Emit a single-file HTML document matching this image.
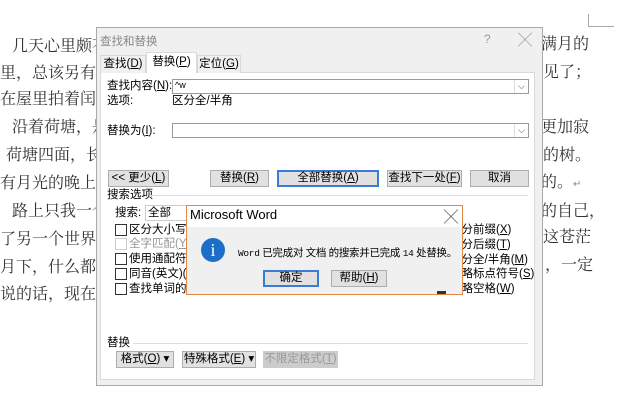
<!DOCTYPE html>
<html><head><meta charset="utf-8"><style>
*{margin:0;padding:0;box-sizing:border-box}
body{width:640px;height:420px;overflow:hidden;background:#fff;position:relative;font-family:"Liberation Sans","Noto Sans CJK SC",sans-serif;font-size:12px;color:#000}
.a{position:absolute;white-space:nowrap}
.bg{font-family:"Liberation Serif","Noto Serif CJK SC",serif;font-size:16px;color:#333;line-height:20px}
.btn{position:absolute;height:17px;background:#e1e1e1;border:1px solid #adadad;text-align:center;line-height:15px;font-size:11.5px}
.cb{position:absolute;width:12px;height:12px;border:1px solid #333;background:#fff}
.lbl{position:absolute;font-size:11.5px;white-space:nowrap;line-height:14px}
.inp{position:absolute;height:15px;background:#fff;border:1px solid #9a9a9a}
.dd{position:absolute;right:0;top:0;width:14px;height:13px;border-left:1px solid #ddd;font-size:9px;text-align:center;line-height:13px;color:#444}
</style></head><body>
<div class="a" style="left:588px;top:14px;width:26px;height:13px;border-left:1px solid #aaa;border-bottom:1px solid #aaa"></div>
<div class="a bg" style="left:12px;top:37px">几天心里颇不宁静</div>
<div class="a bg" style="left:0;top:64px">里，总该另有一番</div>
<div class="a bg" style="left:0;top:90px">在屋里拍着闰儿，</div>
<div class="a bg" style="left:12px;top:118px">沿着荷塘，是一</div>
<div class="a bg" style="left:6px;top:146px">荷塘四面，长着</div>
<div class="a bg" style="left:0;top:174px">有月光的晚上，这</div>
<div class="a bg" style="left:12px;top:202px">路上只我一个人</div>
<div class="a bg" style="left:0;top:230px">了另一个世界里。</div>
<div class="a bg" style="left:0;top:258px">月下，什么都可以</div>
<div class="a bg" style="left:0;top:285px">说的话，现在都可</div>
<div class="a bg" style="left:541px;top:35px">满月的</div>
<div class="a bg" style="left:543px;top:63px">见了；</div>
<div class="a bg" style="left:541px;top:118px">更加寂</div>
<div class="a bg" style="left:543px;top:146px">的树。</div>
<div class="a bg" style="left:541px;top:173px">的。<span style="font-size:10px;color:#888">↵</span></div>
<div class="a bg" style="left:541px;top:202px">的自己，</div>
<div class="a bg" style="left:543px;top:228px">这苍茫</div>
<div class="a bg" style="left:545px;top:256px">，一定</div>

<!-- dialog -->
<div class="a" style="left:96px;top:27px;width:447px;height:359px;background:#f0f0f0;border:1px solid #aaa"></div>
<div class="a" style="left:100px;top:33px;color:#888;font-size:11.5px">查找和替换</div>
<div class="a" style="left:484px;top:32px;color:#999;font-size:12px">?</div>
<div class="a" style="left:518px;top:30px;color:#888;font-size:14px;font-weight:300">╳</div>
<div class="a" style="left:100px;top:72px;width:435px;height:308px;background:#fff;border:1px solid #d9d9d9"></div>
<div class="a" style="left:100px;top:55px;width:46px;height:18px;border:1px solid #d9d9d9;border-bottom:none;background:#f0f0f0;font-size:11.5px;text-align:center;line-height:17px">查找(<u>D</u>)</div>
<div class="a" style="left:146px;top:52px;width:51px;height:21px;border:1px solid #d9d9d9;border-bottom:none;background:#fff;font-size:11.5px;text-align:center;line-height:18px">替换(<u>P</u>)</div>
<div class="a" style="left:197px;top:55px;width:44px;height:18px;border:1px solid #d9d9d9;border-bottom:none;background:#f0f0f0;font-size:11.5px;text-align:center;line-height:17px">定位(<u>G</u>)</div>

<div class="lbl" style="left:107px;top:79px">查找内容(<u>N</u>):</div>
<div class="inp" style="left:172px;top:79px;width:357px"><span style="font-size:9px;position:absolute;left:2px;top:0">^w</span><div class="dd">⌵</div></div>
<div class="lbl" style="left:107px;top:94px">选项:</div>
<div class="lbl" style="left:172px;top:94px">区分全/半角</div>
<div class="lbl" style="left:107px;top:124px">替换为(<u>I</u>):</div>
<div class="inp" style="left:172px;top:123px;width:357px"><div class="dd">⌵</div></div>

<div class="btn" style="left:108px;top:170px;width:61px">&lt;&lt; 更少(<u>L</u>)</div>
<div class="btn" style="left:210px;top:170px;width:59px">替换(<u>R</u>)</div>
<div class="btn" style="left:277px;top:170px;width:102px;border:2px solid #3a7bd5;line-height:13px">全部替换(<u>A</u>)</div>
<div class="btn" style="left:387px;top:170px;width:75px">查找下一处(<u>F</u>)</div>
<div class="btn" style="left:470px;top:170px;width:59px">取消</div>

<div class="lbl" style="left:107px;top:188px">搜索选项</div>
<div class="a" style="left:150px;top:195px;width:378px;height:1px;background:#ddd"></div>
<div class="lbl" style="left:115px;top:206px">搜索:</div>
<div class="a" style="left:145px;top:205px;width:54px;height:16px;border:1px solid #ccc;background:#fff;font-size:11.5px;padding-left:2px;line-height:14px">全部</div>
<div class="cb" style="left:115px;top:224px"></div><div class="lbl" style="left:129px;top:223px">区分大小写(<u>H</u>)</div>
<div class="cb" style="left:115px;top:238px;border-color:#ccc"></div><div class="lbl" style="left:129px;top:237px;color:#999">全字匹配(<u>Y</u>)</div>
<div class="cb" style="left:115px;top:253px"></div><div class="lbl" style="left:129px;top:252px">使用通配符(<u>U</u>)</div>
<div class="cb" style="left:115px;top:268px"></div><div class="lbl" style="left:129px;top:267px">同音(英文)(<u>K</u>)</div>
<div class="cb" style="left:115px;top:283px"></div><div class="lbl" style="left:129px;top:282px">查找单词的所有形式</div>
<div class="lbl" style="left:450px;top:223px">区分前缀(<u>X</u>)</div>
<div class="lbl" style="left:450px;top:238px">区分后缀(<u>T</u>)</div>
<div class="lbl" style="left:450px;top:253px">区分全/半角(<u>M</u>)</div>
<div class="lbl" style="left:450px;top:267px">忽略标点符号(<u>S</u>)</div>
<div class="lbl" style="left:450px;top:282px">忽略空格(<u>W</u>)</div>

<div class="lbl" style="left:107px;top:336px">替换</div>
<div class="a" style="left:133px;top:343px;width:395px;height:1px;background:#ddd"></div>
<div class="btn" style="left:116px;top:351px;width:58px">格式(<u>O</u>) ▾</div>
<div class="btn" style="left:182px;top:351px;width:74px">特殊格式(<u>E</u>) ▾</div>
<div class="btn" style="left:263px;top:351px;width:75px;background:#ccc;border-color:#ccc;color:#999">不限定格式(<u>T</u>)</div>

<!-- message box -->
<div class="a" style="left:186px;top:205px;width:277px;height:90px;background:#f0f0f0;border:1px solid #e0894a"></div>
<div class="a" style="left:187px;top:206px;width:275px;height:21px;background:#fff"></div>
<div class="a" style="left:190px;top:207px;font-size:13px">Microsoft Word</div>
<div class="a" style="left:444px;top:207px;font-size:14px;color:#222">╳</div>
<div class="a" style="left:201px;top:238px;width:24px;height:24px;border-radius:50%;background:#1c6fc9;color:#fff;text-align:center;font:18px/24px 'Liberation Serif',serif">i</div>
<div class="a" style="left:238px;top:245px;font-size:10.5px;letter-spacing:-0.3px"><span style="font-family:'Liberation Mono',monospace;font-size:9.5px">Word</span> 已完成对 文档 的搜索并已完成 <span style="font-family:'Liberation Mono',monospace;font-size:9.5px">14</span> 处替换。</div>
<div class="btn" style="left:263px;top:270px;width:56px;border:2px solid #3a7bd5;line-height:13px">确定</div>
<div class="btn" style="left:331px;top:270px;width:56px">帮助(<u>H</u>)</div>
<div class="a" style="left:437px;top:291px;width:9px;height:3px;background:#333"></div>
</body></html>
